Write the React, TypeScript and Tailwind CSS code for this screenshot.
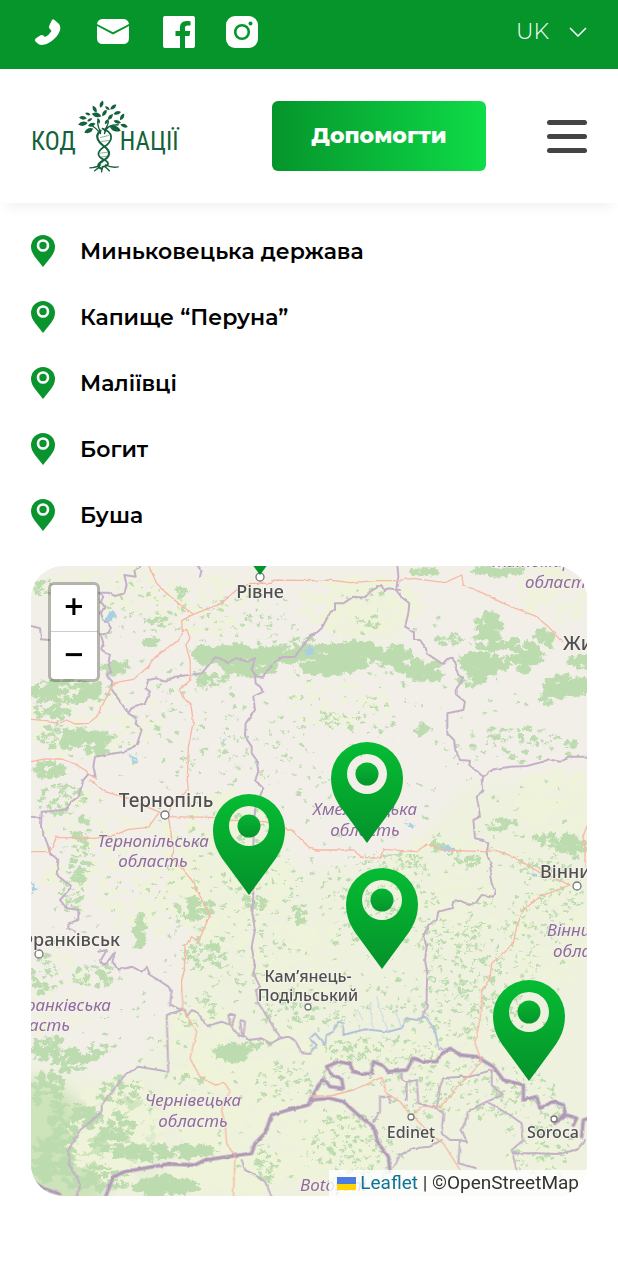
import React from "react";

const places = ["Миньковецька держава", "Капище “Перуна”", "Маліївці", "Богит", "Буша"];

type Cluster = [x: number, y: number, rx: number, ry: number, count: number, size: number];

/* Wooded areas: centre, radii, number of patches, patch size */
const woods: Cluster[] = [
  [232, 655, 38, 9, 80, 6], [285, 654, 30, 7, 55, 6], [212, 680, 16, 6, 22, 4], [250, 669, 26, 6, 34, 5],
  [330, 660, 28, 14, 80, 6], [375, 655, 36, 11, 76, 6], [425, 672, 18, 10, 46, 5], [300, 645, 20, 8, 16, 4],
  [405, 664, 16, 8, 22, 5], [488, 632, 13, 18, 46, 5], [480, 664, 22, 10, 54, 6], [512, 655, 26, 16, 54, 5],
  [542, 642, 14, 12, 22, 4], [568, 686, 22, 10, 60, 6], [580, 662, 12, 7, 22, 4], [546, 698, 8, 8, 14, 4],
  [470, 680, 14, 6, 18, 4], [422, 572, 15, 3, 24, 4], [498, 571, 24, 4, 34, 4], [448, 640, 16, 4, 12, 3],
  [72, 690, 30, 12, 66, 5], [45, 692, 13, 10, 28, 4], [50, 712, 20, 7, 26, 4], [115, 668, 14, 6, 18, 4],
  [88, 742, 24, 13, 56, 5], [60, 735, 22, 14, 34, 3], [48, 770, 16, 8, 34, 4], [152, 643, 7, 4, 12, 4],
  [45, 588, 12, 8, 20, 3], [182, 594, 6, 7, 9, 4], [160, 620, 12, 3, 10, 3], [373, 625, 8, 3, 8, 3],
  [60, 800, 26, 16, 40, 3], [82, 850, 10, 34, 50, 3], [72, 890, 12, 24, 40, 3], [140, 930, 4, 18, 26, 4],
  [195, 908, 18, 11, 30, 4], [205, 955, 22, 14, 34, 3], [95, 975, 22, 12, 40, 3], [45, 975, 14, 20, 40, 3],
  [48, 1050, 16, 14, 46, 4], [75, 1062, 14, 12, 34, 4], [95, 1050, 12, 10, 20, 3], [48, 1090, 16, 20, 50, 4],
  [74, 1120, 24, 18, 60, 4], [110, 1132, 26, 20, 66, 4], [54, 1155, 22, 26, 60, 5], [96, 1180, 32, 14, 60, 4],
  [165, 1187, 30, 9, 64, 6], [140, 1152, 26, 8, 44, 5], [190, 1152, 22, 6, 34, 5], [120, 1090, 24, 14, 36, 3],
  [232, 1053, 18, 7, 40, 5], [252, 1046, 24, 4, 24, 3], [265, 1165, 8, 18, 24, 3], [190, 1080, 18, 5, 12, 3],
  [256, 900, 14, 9, 20, 3], [300, 915, 5, 14, 18, 3], [200, 1010, 24, 20, 30, 2], [295, 1080, 40, 20, 50, 2],
  [556, 842, 24, 9, 36, 4], [572, 846, 12, 12, 20, 4], [500, 824, 16, 7, 22, 3], [468, 860, 14, 6, 18, 3],
  [438, 846, 5, 12, 14, 3], [395, 860, 26, 8, 34, 2], [540, 866, 26, 7, 26, 2], [480, 960, 60, 60, 220, 2],
  [380, 900, 60, 50, 160, 2], [550, 900, 34, 40, 100, 2], [420, 730, 16, 5, 9, 4], [515, 745, 50, 20, 40, 3],
  [570, 745, 5, 10, 9, 3], [470, 1090, 90, 30, 180, 2], [380, 1050, 60, 14, 100, 2], [350, 1150, 50, 36, 160, 2],
  [540, 1140, 40, 40, 90, 2], [460, 1010, 70, 30, 130, 2], [275, 780, 60, 50, 50, 2], [360, 715, 40, 20, 40, 2],
  [200, 720, 50, 60, 60, 2], [130, 610, 60, 30, 60, 2], [230, 620, 60, 24, 60, 2], [310, 1010, 60, 20, 90, 2],
  [230, 900, 70, 90, 160, 2], [150, 1010, 90, 10, 14, 2], [309, 880, 270, 300, 700, 2],
];

/* Cropland: lighter, yellower patches */
const fields: Cluster[] = [
  [360, 605, 60, 28, 160, 5], [210, 605, 60, 30, 90, 4], [110, 590, 70, 24, 120, 4], [560, 590, 40, 30, 110, 4],
  [340, 705, 50, 24, 70, 4], [90, 720, 70, 40, 130, 4], [230, 870, 60, 80, 160, 7], [150, 880, 50, 60, 110, 5],
  [300, 960, 50, 40, 110, 5], [560, 800, 44, 30, 110, 5], [440, 890, 60, 60, 130, 5], [550, 930, 40, 60, 110, 5],
  [200, 1030, 40, 24, 70, 6], [230, 1100, 60, 50, 160, 7], [330, 1150, 50, 40, 160, 8], [120, 1130, 50, 50, 120, 7],
  [380, 1050, 80, 20, 110, 5], [90, 850, 50, 60, 110, 4], [480, 1060, 80, 60, 140, 4], [60, 1000, 30, 50, 60, 4],
  [230, 1170, 60, 20, 110, 8], [300, 1060, 40, 40, 80, 5], [540, 1150, 40, 30, 60, 4],
];

function patches(clusters: Cluster[], seed: number): string {
  let s = seed;
  const rnd = () => {
    s = (s * 1664525 + 1013904223) % 4294967296;
    return s / 4294967296;
  };
  const out: string[] = [];
  for (const [cx, cy, rx, ry, count, size] of clusters) {
    for (let i = 0; i < count; i++) {
      const a = rnd() * Math.PI * 2;
      const d = Math.sqrt(rnd());
      const x = cx + Math.cos(a) * rx * d;
      const y = cy + Math.sin(a) * ry * d;
      const r = size * (0.5 + rnd() * 0.8);
      const turn = rnd() * 6;
      const points: string[] = [];
      for (let k = 0; k < 6; k++) {
        const t = turn + (k * Math.PI) / 3;
        const q = r * (0.5 + rnd() * 0.7);
        points.push(`${(x + Math.cos(t) * q * 1.2).toFixed(1)} ${(y + Math.sin(t) * q * 0.8).toFixed(1)}`);
      }
      out.push(`M${points.join("L")}Z`);
    }
  }
  return out.join("");
}

const woodsPath = patches(woods, 11);
const fieldsPath = patches(fields, 47);

type Sheet = { at: string; roads: string; borders: string; national?: string; river?: string };

/* The map is traced on six sheets that join edge to edge */
const sheets: Sheet[] = [
  {
    at: "translate(-18 -18)",
    roads:
      "M370 15L395 70L420 95L460 130L505 163L470 182L472 215L485 208L495 235L483 255L495 300L497 360L463 388L475 415L497 430L505 485L490 560L487 660M505 163L590 130L640 85L680 70L740 70L745 60L870 62M472 220L455 245L385 295L370 320L325 358L270 368L255 390L215 470L190 490L150 492L125 480L100 492L65 482L18 478M18 605L60 597L110 597L150 612L180 630L215 660",
    borders:
      "M18 198L45 205L48 238L72 240M350 15L328 30L332 50L298 45L305 75L298 100L270 108L250 98L222 98L235 110L228 125L238 140L228 160L235 180L248 188L258 205L250 218L228 225L235 250L228 268L255 285L250 310L258 335L245 345L262 365L258 385L310 460M310 460L322 440L360 430L375 395L362 385L370 360L395 355L420 365L450 350L490 345L530 340L570 292L590 296L610 310L630 294L650 300L670 305L690 293L680 330L695 350L715 350L740 315L770 292L810 290L850 235L870 220M310 460L335 475L332 490L350 510L335 555L300 575L270 580L210 590L205 620L212 650L190 642L175 660M690 350L692 370L705 380L715 395L685 410L690 450L662 490L660 530L680 560L680 580L695 600L700 635L690 660M515 15L530 30L525 50",
  },
  {
    at: "translate(837 -18)",
    roads:
      "M0 62L60 60L120 68L200 62L260 62L310 55L405 68L455 45L460 75L520 100L580 130L680 170L715 200L755 245",
    borders:
      "M0 225L20 218L35 205L62 155L75 150L75 130L100 130L130 110L150 112L165 112L185 92L215 75L220 90L235 85L270 90M262 15L265 50L258 90L275 112L298 130L295 160L285 200L312 215L312 240L330 240L348 265L350 280L380 300L398 312L410 298L428 293L445 345L460 355L440 385L440 405L465 425L460 450L412 460L412 520L432 540L436 570L450 600L480 602L478 615L520 650L550 628L600 620L650 618L700 605L715 598L750 605L785 590L835 590M520 650L515 675",
  },
  {
    at: "translate(-18 642)",
    roads:
      "M195 0L240 35L290 50L400 95L430 110L560 112L600 120L720 125L800 150L855 205M430 110L445 200L440 230L500 300L555 405L520 485L500 470L480 500L478 570L470 600L470 632M18 215L75 215L95 172L210 175L270 165L310 148L370 142L400 100M430 100L445 65L490 30L487 0",
    borders:
      "M175 0L160 50L140 65L120 90L50 95L48 140L70 200L75 220L100 240L95 285L140 320L105 360L125 385L160 390L160 420L130 430L130 445L150 455M690 0L715 25L700 60L690 90L685 190L690 260L685 345L682 400L690 450L680 500L690 560L685 580L705 620L693 632M220 515L245 510L225 545L240 555L270 515L262 545L280 570L320 560L350 575L365 560L375 585L400 600L430 620L440 635M18 110L48 115",
  },
  {
    at: "translate(837 642)",
    roads:
      "M0 205L20 210L130 210L155 232L210 235L220 208L320 215L350 192L400 210L520 215L560 212L610 230L680 272L780 315L690 350L640 390L620 440L610 490L545 550L540 595L515 632M835 130L818 170L825 190L825 260",
    borders:
      "M515 0L520 30L500 50L505 75L510 110L490 120L495 175L520 180L535 190L530 220L545 260L540 285L545 310L555 330L550 350L515 345L500 365L480 375L450 362L430 365L425 385L385 395L380 420L355 435L340 470L350 500L345 540L352 580L350 630",
  },
  {
    at: "translate(-18 1272)",
    roads:
      "M470 0L475 60L515 125L495 205L525 260L570 285L600 280L615 305L600 325L590 360L600 400L605 460L630 500L625 625",
    borders:
      "M440 0L435 45L470 58L480 60L485 80L500 60L520 70L545 108L590 95L615 105L610 75L630 75L620 110L640 135L655 140L660 95L645 90L650 130L670 150L710 145L735 162L765 145L790 140L810 150L830 190L855 192M470 60L425 75L430 245L400 240L340 230L300 255L230 345L230 362L215 380L165 420L130 480L135 530L160 570L165 590L150 625M693 0L700 40L730 85L750 120L770 145M650 510L660 540L690 555L720 575L740 620",
    national: "M240 625L265 560L300 545L430 522L510 525L540 510L630 497L680 490L690 460L720 430L740 375L790 360L850 345L860 330M18 570L55 595L105 612",
  },
  {
    at: "translate(837 1272)",
    roads:
      "M0 318L60 318L130 300L215 262L230 310L270 335L300 375M310 370L340 350L390 350L430 310L440 290L480 255L515 215L495 160L515 60L515 0M310 380L370 440L400 460L450 540",
    borders:
      "M275 250L275 265L290 275L290 330M290 275L320 270L325 340L380 355L390 290L400 265L430 262L480 260L545 240L545 285L580 315L530 335L480 360L455 420L470 455L450 450L445 520M380 355L400 370L395 430L420 450L450 450M530 335L600 375L635 400L640 450L605 480L620 540M610 490L680 490L740 492L800 480L825 450M190 395L210 365L210 320L240 320L240 340M250 535L270 495L310 475L360 470L395 450M350 0L350 50L335 85M445 520L500 535",
    national:
      "M0 330L60 325L100 335L150 380L190 410L205 460L235 500L240 545M0 330L40 265L60 290L100 295L95 268L60 250L50 230L85 215L120 222L130 245L160 252L185 250L190 215L215 225L235 245L290 240L310 205L340 215L380 215L390 195L420 175L450 195L500 200L550 230L580 270L640 285L640 330L680 320L690 355L730 335L760 345L765 370L735 400L770 375L800 385L790 405M815 440L820 390L835 385",
    river:
      "M0 190L20 165L0 145L15 130L45 165L50 135L70 125L85 95L100 100L100 135L165 118L235 125L275 115L290 85L320 90L345 80L375 120L385 170L400 180",
  },
];

type Label = { x: number; y: number; text: string; size: number; anchor?: "start" | "middle" | "end" };

const towns: Label[] = [
  { x: 260, y: 598, text: "Рівне", size: 18, anchor: "middle" },
  { x: 563, y: 650, text: "Житомир", size: 19 },
  { x: 166, y: 807, text: "Тернопіль", size: 19, anchor: "middle" },
  { x: 540, y: 878, text: "Вінниця", size: 18 },
  { x: 120, y: 946, text: "Івано-Франківськ", size: 18, anchor: "end" },
  { x: 308, y: 982, text: "Кам’янець-", size: 16, anchor: "middle" },
  { x: 308, y: 1001, text: "Подільський", size: 16, anchor: "middle" },
  { x: 411, y: 1138, text: "Edineț", size: 16, anchor: "middle" },
  { x: 553, y: 1138, text: "Soroca", size: 16, anchor: "middle" },
];

const regions: Label[] = [
  { x: 550, y: 567, text: "Житомирська", size: 17, anchor: "middle" },
  { x: 525, y: 588, text: "область", size: 17 },
  { x: 153, y: 847, text: "Тернопільська", size: 17, anchor: "middle" },
  { x: 153, y: 867, text: "область", size: 17, anchor: "middle" },
  { x: 365, y: 815, text: "Хмельницька", size: 17, anchor: "middle" },
  { x: 365, y: 836, text: "область", size: 17, anchor: "middle" },
  { x: 547, y: 936, text: "Вінницька", size: 17 },
  { x: 553, y: 957, text: "область", size: 17 },
  { x: 111, y: 1011, text: "Івано-Франківська", size: 17, anchor: "end" },
  { x: 70, y: 1031, text: "область", size: 17, anchor: "end" },
  { x: 193, y: 1106, text: "Чернівецька", size: 17, anchor: "middle" },
  { x: 193, y: 1127, text: "область", size: 17, anchor: "middle" },
  { x: 300, y: 1191, text: "Botoșani", size: 17 },
];

const dots: [number, number, number][] = [
  [260, 577, 4], [165, 815, 4], [577, 886, 4], [39, 954, 4], [308, 1007, 3], [411, 1117, 3], [554, 1119, 3],
];

function MapTiles() {
  return (
    <svg
      className="block h-full w-full"
      viewBox="0 0 1668 1890"
      preserveAspectRatio="xMidYMid slice"
      aria-hidden="true"
    >
      <defs>
        <filter id="rough" x="0" y="0" width="1" height="1" colorInterpolationFilters="sRGB">
          <feTurbulence type="fractalNoise" baseFrequency="0.07" numOctaves="3" seed="4" result="n" />
          <feDisplacementMap in="SourceGraphic" in2="n" scale="20" xChannelSelector="R" yChannelSelector="G" />
        </filter>
        <filter id="soft" x="-0.1" y="-0.1" width="1.2" height="1.2">
          <feGaussianBlur stdDeviation="8" />
        </filter>
        <filter id="wavy" x="0" y="0" width="1" height="1" colorInterpolationFilters="sRGB">
          <feTurbulence type="fractalNoise" baseFrequency="0.06" numOctaves="1" seed="9" result="n" />
          <feDisplacementMap in="SourceGraphic" in2="n" scale="9" xChannelSelector="R" yChannelSelector="G" />
        </filter>
      </defs>
      <rect width="1668" height="1890" fill="#f2efe9" />
      <g transform="scale(3) translate(-31 -566)">
        <path
          d="M170 850L250 800L300 870L400 860L470 780H600V1210H110L60 1100L120 1080L180 1010L190 930ZM330 590L395 580L405 640L340 645ZM20 1060L120 1080L170 1130L130 1210H20Z"
          fill="#eff1df"
          filter="url(#soft)"
        />
        <path
          d="M10 1075L62 1086L78 1106L102 1108L122 1090L150 1100L158 1130L140 1150L168 1164L110 1172L100 1210H10Z"
          fill="#cde3ba"
          filter="url(#soft)"
        />
      </g>
      <g filter="url(#rough)">
        <g transform="scale(3) translate(-31 -566)">
          <path d={fieldsPath} fill="#eff3d9" />
          <path d={woodsPath} fill="#bcdbae" />
          <path
            d="M104 617l10-6 2 4-6 8-6-1zM304 650l8-3 3 4-8 5zM220 738l6 0-2 3zM440 846l14 1 2 3-12 2zM402 822l14 4-3 3zM530 873l8 1-3 4zM32 880l5 10-5 4zM128 752l10 10-4 1z"
            fill="#a9cfe3"
          />
        </g>
      </g>
      <g filter="url(#wavy)" fill="none" strokeLinejoin="round" strokeLinecap="round">
        {sheets.map((s) => (
          <g key={s.at} transform={s.at}>
            <path d={s.borders} stroke="#c4b1c7" strokeWidth="6" />
            <path d={s.river} stroke="#b3c1d6" strokeWidth="6" />
            <path d={s.national} stroke="#cdbdcf" strokeWidth="13" />
            <path d={s.national} stroke="#ae9bb1" strokeWidth="7" />
            <path d={s.roads} stroke="#f8b8a4" strokeWidth="4" />
          </g>
        ))}
        <path
          d="M997 1362L977 1330M1027 1390L1017 1310M1072 1397L1047 1330L1037 1292M1112 1387L1092 1332"
          stroke="#c3d6e4"
          strokeWidth="3"
        />
      </g>
      <g transform="scale(3) translate(-31 -566)" strokeLinejoin="round" fontFamily="'Noto Sans', sans-serif">
        {dots.map(([x, y, r]) => (
          <circle key={`${x}-${y}`} cx={x} cy={y} r={r} fill="#fff" stroke="#777" strokeWidth="1.3" />
        ))}
        <g fill="#8f6c9c" stroke="#f4f1ee" strokeOpacity="0.7" strokeWidth="2" paintOrder="stroke" fontStyle="italic">
          {regions.map((l) => (
            <text key={`${l.x}-${l.y}`} x={l.x} y={l.y} fontSize={l.size} textAnchor={l.anchor}>{l.text}</text>
          ))}
        </g>
        <g fill="#505050" stroke="#f6f4f0" strokeOpacity="0.8" strokeWidth="2" paintOrder="stroke" fontWeight="500">
          {towns.map((l) => (
            <text key={`${l.x}-${l.y}`} x={l.x} y={l.y} fontSize={l.size} textAnchor={l.anchor}>{l.text}</text>
          ))}
        </g>
      </g>
    </svg>
  );
}

function Marker({ label, place }: { label: string; place: string }) {
  return (
    <button type="button" aria-label={label} className={`absolute h-[101px] w-[72px] ${place}`}>
      <svg viewBox="0 0 72 101" className="block h-full w-full">
        <defs>
          <linearGradient id="pin" x1="0" y1="0" x2="0" y2="101" gradientUnits="userSpaceOnUse">
            <stop offset="0" stopColor="#06bb33" />
            <stop offset="0.4" stopColor="#05ac2f" />
            <stop offset="1" stopColor="#04922b" />
          </linearGradient>
          <linearGradient id="core" x1="0" y1="0" x2="0" y2="1">
            <stop offset="0" stopColor="#06b432" />
            <stop offset="1" stopColor="#04952b" />
          </linearGradient>
        </defs>
        <path
          fill="url(#pin)"
          fillRule="evenodd"
          d="M36 0A36 36 0 0 0 0 36C0 49 5 59 11 67L36 101L61 67C67 59 72 49 72 36A36 36 0 0 0 36 0ZM36 12A20 20 0 1 1 36 52A20 20 0 1 1 36 12Z"
        />
        <circle cx="36" cy="32" r="11.5" fill="url(#core)" />
      </svg>
    </button>
  );
}

function ListPin() {
  return (
    <svg viewBox="0 0 24 32" className="h-8 w-6 shrink-0" aria-hidden="true">
      <path d="M12 0A12 12 0 0 0 0 12C0 16 2 19 4 22L12 32L20 22C22 19 24 16 24 12A12 12 0 0 0 12 0Z" fill="#0a942d" />
      <circle cx="12" cy="10.500" r="5" fill="none" stroke="#fff" strokeWidth="2.600" />
    </svg>
  );
}

const leaves: [number, number, number, number][] = [
  [67, 4, -70, 4], [73, 8, 40, 3], [60, 9, 60, 4], [79, 7, -40, 4], [53, 14, 20, 3], [62, 15, 15, 5], [70, 13, -55, 4],
  [83, 13, -15, 4], [48, 18, 5, 4], [55, 20, -30, 3], [76, 17, -50, 4], [88, 17, -60, 4], [48, 24, -10, 5],
  [57, 25, -20, 4], [83, 22, 15, 4], [90, 26, 20, 4], [54, 31, -25, 5], [81, 29, 20, 6], [72, 22, -60, 3], [64, 21, 70, 3],
];

function Tree() {
  return (
    <svg viewBox="43 0 51 74" className="h-[73px] w-[50px]" aria-hidden="true" fill="none" stroke="#14623c" strokeLinecap="round">
      {leaves.map(([x, y, turn, r]) => (
        <path
          key={`${x}-${y}`}
          d={`M${-r} 0Q0 ${-r * 0.9} ${r} 0Q0 ${r * 0.9} ${-r} 0Z`}
          transform={`translate(${x} ${y}) rotate(${turn})`}
          fill="#14623c"
          stroke="none"
        />
      ))}
      <path d="M56 25C61 28 63 30 66 34M63 22C63 27 65 30 66 33M84 25C76 25 71 28 70 34M74 21C74 25 72 28 70 31" strokeWidth="1.400" />
      <path d="M68 29C80 33 78 41 72 46C62 52 61 57 70 61C76 64 74 67 68 68" strokeWidth="1.800" />
      <path d="M66 31C59 37 64 43 71 48C79 55 72 60 68 62C63 65 62 68 67 70" strokeWidth="2.200" />
      <path d="M66 38L74 36M67 42L75 41M66 54L73 53M66 58L73 57" strokeWidth=".5" />
      <path d="M66 66C63 68 59 69 55 69M71 66C75 68 79 69 84 68M65 68L60 72M68 68L67 73M71 68L75 72" strokeWidth="1.400" />
    </svg>
  );
}

export default function App() {
  return (
    <div className="min-h-screen bg-white font-['Montserrat','Inter',sans-serif] text-black">
      <div className="flex h-[69px] items-center justify-between bg-[#05952b] px-[31px] pb-[5px] text-white">
        <nav aria-label="Контакти" className="flex items-center gap-[31px]">
          <a href="tel:" aria-label="Телефон">
            <svg viewBox="0 0 32 32" className="size-8" fill="currentColor">
              <path d="M21 4Q22 2.700 23.500 4L28 8Q29.500 9.500 29.300 13C28.500 19 20 28 12 28.800Q8.500 29.300 7 27.800L4.500 25.500Q3 24 4.700 22.500L9.500 19.300Q11 18.500 12.300 19.500L14.200 21Q18 19 20.500 15L18.300 12.300Q17.500 11 18.300 9.500Z" />
            </svg>
          </a>
          <a href="mailto:" aria-label="Пошта" className="ml-[3px]">
            <svg viewBox="0 0 32 32" className="size-8" fill="currentColor">
              <path d="M0 8Q1 3 6 3H26Q31 3 32 8L16 16.300Z" />
              <path d="M0 10L16 18.500L32 10V22Q32 28 26 28H6Q0 28 0 22Z" />
            </svg>
          </a>
          <a href="#facebook" aria-label="Facebook" className="ml-[3px]">
            <svg viewBox="0 0 32 32" className="size-8" fill="currentColor">
              <path d="M2 0H30Q32 0 32 2V30Q32 32 30 32H22V20H26.500L27.300 15H22V12Q22 9.600 24.800 9.600H27.500V5.200Q25.500 4.800 23.500 4.900Q17 5 17 11.500V15H12.500V20H17V32H2Q0 32 0 30V2Q0 0 2 0Z" />
            </svg>
          </a>
          <a href="#instagram" aria-label="Instagram">
            <svg viewBox="0 0 32 32" className="size-8">
              <rect width="32" height="32" rx="9" fill="currentColor" />
              <circle cx="16" cy="16" r="6.800" fill="none" stroke="#05952b" strokeWidth="2.600" />
              <circle cx="24.500" cy="7.500" r="2" fill="#05952b" />
            </svg>
          </a>
        </nav>
        <button type="button" aria-haspopup="listbox" className="flex items-center gap-5 text-[22px] leading-8 font-light">
          UK
          <svg viewBox="0 0 18 10" className="h-[10px] w-[18px]" fill="none" stroke="currentColor" strokeWidth="1.500">
            <path d="M1 1L9 9L17 1" />
          </svg>
        </button>
      </div>

      <header className="flex h-[134px] items-center justify-between bg-white px-[31px] shadow-[0_10px_12px_-6px_rgba(0,0,0,0.06)]">
        <a
          href="#home"
          className="flex items-center font-['Liberation_Sans_Narrow','Roboto_Condensed','Open_Sans',sans-serif] text-[25px] leading-8 text-[#14623c]"
        >
          <span className="mt-3">КОД</span>
          <span className="-mr-2 ml-[2px]">
            <Tree />
          </span>
          <span className="mt-3">НАЦІЇ</span>
        </a>
        <div className="flex items-center gap-[61px]">
          <button
            type="button"
            className="h-[70px] w-[214px] rounded-md bg-linear-to-r from-[#05952b] to-[#0fdc48] text-[22px] leading-8 font-extrabold text-white"
          >
            Допомогти
          </button>
          <button type="button" aria-label="Меню" className="flex w-10 flex-col gap-[9px]">
            <span className="h-[5px] rounded-full bg-[#444]" />
            <span className="h-[5px] rounded-full bg-[#444]" />
            <span className="h-[5px] rounded-full bg-[#444]" />
          </button>
        </div>
      </header>

      <main className="px-[31px] pt-8 pb-[84px]">
        <ul className="flex flex-col gap-[34px]">
          {places.map((name) => (
            <li key={name} className="flex items-center gap-[25px] text-[22px] leading-[30px] font-semibold">
              <ListPin />
              <span className="pt-[2px]">{name}</span>
            </li>
          ))}
        </ul>

        <section aria-label="Мапа" className="relative mt-[35px] h-[630px] overflow-hidden rounded-[32px]">
          <MapTiles />
          <Marker label="Рівне" place="left-[193px] top-[-92px]" />
          <Marker label="Капище “Перуна”" place="left-[300px] top-[176px]" />
          <Marker label="Богит" place="left-[182px] top-[228px]" />
          <Marker label="Миньковецька держава" place="left-[315px] top-[302px]" />
          <Marker label="Буша" place="left-[462px] top-[414px]" />

          <div className="absolute top-4 left-[17px] flex w-[52px] flex-col rounded-md border-3 border-black/25 bg-white bg-clip-padding font-['DejaVu_Sans',sans-serif] text-[26px] leading-[42px] font-bold">
            <button type="button" aria-label="Збільшити" className="h-[47px] border-b border-[#ccc] pb-1">+</button>
            <button type="button" aria-label="Зменшити" className="h-[47px] pb-1">−</button>
          </div>

          <div className="absolute right-0 bottom-0 flex items-center bg-white/80 px-2 font-['Roboto',sans-serif] text-[19px] leading-[26px] text-[#333]">
            <svg viewBox="0 0 19 13" className="mr-1 h-[13px] w-[19px]" aria-hidden="true">
              <path fill="#4c7be1" d="M0 0h19v7H0z" />
              <path fill="#ffd500" d="M0 7h19v6H0z" />
            </svg>
            <a href="#leaflet" className="text-[#0f7298]">Leaflet</a>
            <span className="whitespace-pre"> | ©OpenStreetMap</span>
          </div>
        </section>
      </main>
    </div>
  );
}
